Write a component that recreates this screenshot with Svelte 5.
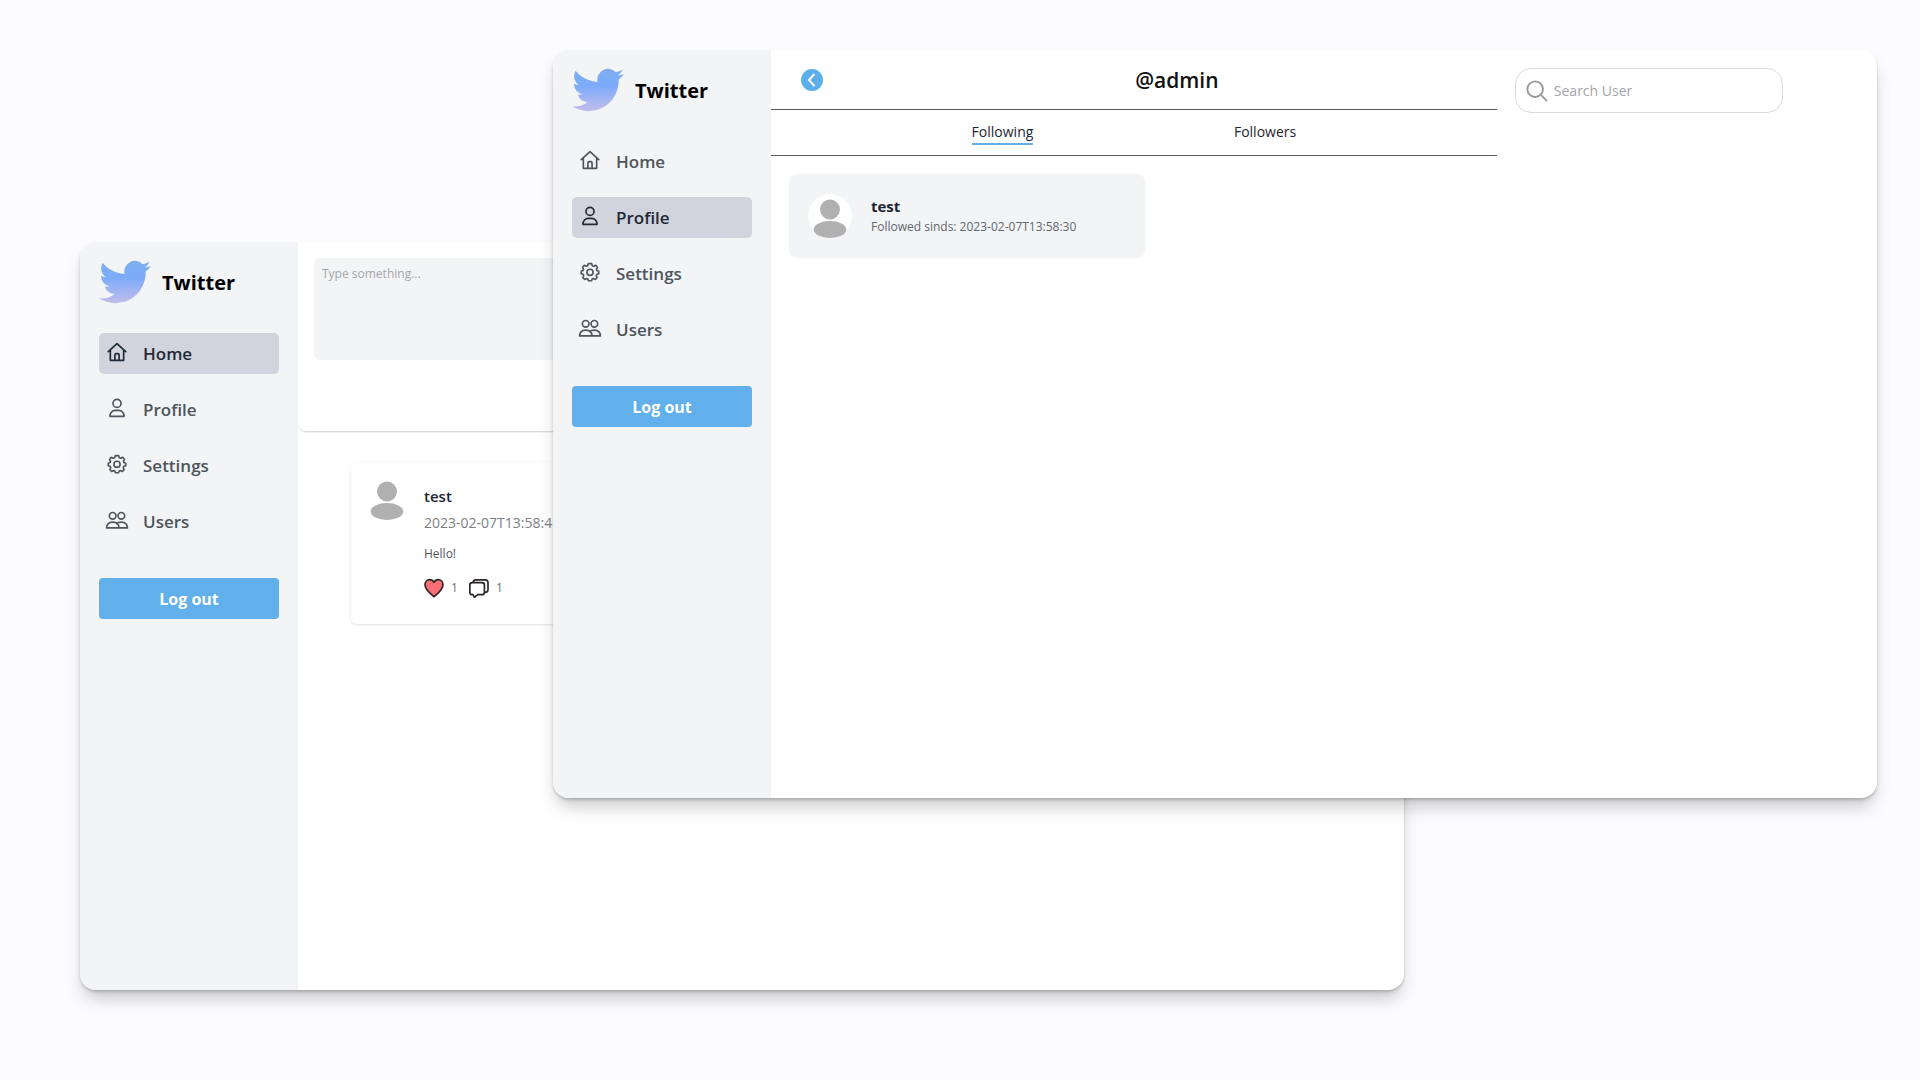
<script>
  const items = ['Home', 'Profile', 'Settings', 'Users'];
</script>

{#snippet icon(name)}
  <svg class="nav-icon" viewBox="0 0 24 24" aria-hidden="true">
    {#if name === 'Home'}
      <path d="M1.500 11.500 12 2 22.500 11.500M4 10V22H20V10M9.500 22V15.500A1.500 1.500 0 0 1 11 14H13A1.500 1.500 0 0 1 14.500 15.500V22" />
    {:else if name === 'Profile'}
      <circle cx="12" cy="6.500" r="4.800" />
      <path d="M3.500 22C3.500 17.800 6.500 14.800 10 14.800H14C17.500 14.800 20.500 17.800 20.500 22Z" />
    {:else if name === 'Settings'}
      <path d="M10 2H14L14.800 4.400 16.500 5.100 18.900 4 21 6.500 19.700 8.800 20.200 10.200 22.500 11V14L20.200 14.800 19.500 16.500 20.500 18.700 18.300 21 16 19.900 14.600 20.500 13.800 22.500H10.200L9.400 20.500 8 19.900 5.700 21 3.500 18.700 4.500 16.500 3.800 14.800 1.500 14V11L3.800 10.200 4.300 8.800 3 6.500 5.100 4 7.500 5.100 9.200 4.400Z" />
      <circle cx="12" cy="12.400" r="3.700" />
    {:else}
      <circle cx="6.800" cy="7" r="4" />
      <circle cx="17.200" cy="7" r="4" />
      <path d="M-.5 21.500C-.3 17.500 2 14.500 6.800 14.500S14.300 17.500 14.500 21.500ZM11.500 16.200C13 15 15 14.500 17.200 14.500 22 14.500 24.300 17.500 24.500 21.500H14.500" />
    {/if}
  </svg>
{/snippet}

{#snippet avatar()}
  <svg class="avatar" viewBox="0 0 44 44" aria-hidden="true">
    <circle cx="22" cy="22" r="22" fill="#fff" />
    <circle cx="22" cy="15.500" r="10" />
    <ellipse cx="22" cy="35.500" rx="16.300" ry="8.500" />
  </svg>
{/snippet}

{#snippet sidebar(active, id)}
  <aside class="sidebar">
    <div class="brand">
      <svg class="bird" viewBox="0 2.200 24 19.600" aria-hidden="true">
        <defs>
          <linearGradient id={id} x1="0" y1="0" x2="0" y2="1">
            <stop offset="0" stop-color="#7faef0" />
            <stop offset=".4" stop-color="#7dabfb" />
            <stop offset="1" stop-color="#c3bcec" />
          </linearGradient>
        </defs>
        <path fill="url(#{id})" d="M23.953 4.570a10 10 0 0 1-2.825.775 4.958 4.958 0 0 0 2.163-2.723c-.951.555-2.005.959-3.127 1.184a4.920 4.920 0 0 0-8.384 4.482C7.690 8.095 4.067 6.130 1.640 3.162a4.822 4.822 0 0 0-.666 2.475c0 1.710.870 3.213 2.188 4.096a4.904 4.904 0 0 1-2.228-.616v.060a4.923 4.923 0 0 0 3.946 4.827 4.996 4.996 0 0 1-2.212.085 4.936 4.936 0 0 0 4.604 3.417 9.867 9.867 0 0 1-6.102 2.105c-.390 0-.779-.023-1.170-.067a13.995 13.995 0 0 0 7.557 2.209c9.053 0 13.998-7.496 13.998-13.985 0-.210 0-.420-.015-.630A9.935 9.935 0 0 0 24 4.590z" />
      </svg>
      <span>Twitter</span>
    </div>
    <nav>
      {#each items as item}
        <a href="#{item.toLowerCase()}" class:active={item === active}>
          {@render icon(item)}<span>{item}</span>
        </a>
      {/each}
    </nav>
    <button class="logout" type="button">Log out</button>
  </aside>
{/snippet}

<main class="desktop">
  <section class="window back-window" aria-label="Home">
    {@render sidebar('Home', 'bird-home')}
    <div class="feed">
      <div class="composer">
        <textarea placeholder="Type something..." aria-label="New post"></textarea>
      </div>
      <article class="post">
        {@render avatar()}
        <div class="post-body">
          <strong>test</strong>
          <time>2023-02-07T13:58:4</time>
          <p>Hello!</p>
          <div class="actions">
            <button type="button" aria-label="Like">
              <svg viewBox="0 0 24 24" aria-hidden="true">
                <path fill="#fb6f74" d="M12 22.500C8.500 19.500 1.200 14.200 1.200 8 1.200 4.500 3.800 2 6.800 2 9.200 2 11 3.300 12 5.200 13 3.300 14.800 2 17.200 2 20.200 2 22.800 4.500 22.800 8 22.800 14.200 15.500 19.500 12 22.500Z" />
              </svg>
            </button>
            <span>1</span>
            <button type="button" aria-label="Comments">
              <svg viewBox="0 0 24 24" aria-hidden="true">
                <path fill="none" d="M4 5.500H15.500A3 3 0 0 1 18.500 8.500V17A3 3 0 0 1 15.500 20H10.500L6.500 23.300 4.800 20H4A3 3 0 0 1 1 17V8.500A3 3 0 0 1 4 5.500ZM5 5.500C5 3.500 6 2.200 8 2.200H19.500A3.300 3.300 0 0 1 22.800 5.500V14C22.800 16 21.500 17.200 18.500 17.200" />
              </svg>
            </button>
            <span>1</span>
          </div>
        </div>
      </article>
    </div>
  </section>

  <section class="window front-window" aria-label="Profile">
    {@render sidebar('Profile', 'bird-profile')}
    <div class="follows">
      <header>
        <button class="back" type="button" aria-label="Back">
          <svg viewBox="0 0 22 22" aria-hidden="true"><path d="M13 5.500 8 11 13 16.500" /></svg>
        </button>
        <h1>@admin</h1>
      </header>
      <div class="tabs">
        <button type="button" class="current">Following</button>
        <button type="button">Followers</button>
      </div>
      <article class="user">
        {@render avatar()}
        <div>
          <strong>test</strong>
          <p>Followed sinds: 2023-02-07T13:58:30</p>
        </div>
      </article>
    </div>
    <div class="search-column">
      <label class="search">
        <svg viewBox="0 0 24 24" aria-hidden="true">
          <circle cx="10" cy="10" r="8.500" /><path d="M16 16 23 23" />
        </svg>
        <input type="search" placeholder="Search User" aria-label="Search User" />
      </label>
    </div>
  </section>
</main>

<style>
  :global(body) {
    margin: 0;
    background: #fcfcfe;
  }
  .desktop, .desktop * {
    box-sizing: border-box;
  }
  .desktop {
    position: relative;
    min-height: 100vh;
    overflow: hidden;
    font-family: "Open Sans", "Noto Sans", sans-serif;
    font-size: 14px;
    color: #1f2430;
  }
  button, input, textarea {
    font: inherit;
    color: inherit;
    border: 0;
    margin: 0;
    padding: 0;
    background: none;
  }
  button { cursor: pointer; }
  p, h1 { margin: 0; }
  svg { display: block; flex: none; }

  .window {
    position: absolute;
    width: calc(100vw - 596px);
    min-height: 748px;
    display: grid;
    grid-template-columns: 218px minmax(0, 21fr) minmax(0, 11fr);
    border-radius: 16px;
    overflow: hidden;
    background: #fff;
    box-shadow: 0 2px 3px rgba(0, 0, 0, .18), 0 12px 18px -4px rgba(0, 0, 0, .22);
  }
  .back-window { left: 80px; top: 242px; }
  .front-window { right: 43px; top: 50px; }

  .sidebar {
    padding: 18px 19px;
    background: #f3f4f6;
  }
  .brand {
    display: flex;
    align-items: center;
    gap: 11px;
    height: 45px;
    margin-bottom: 28px;
    font-size: 20px;
    font-weight: 700;
    color: #000;
  }
  .bird { width: 52px; height: 44px; margin-bottom: 2px; }
  nav {
    display: grid;
    gap: 15px;
  }
  nav a {
    display: flex;
    align-items: center;
    gap: 16px;
    height: 41px;
    padding: 0 8px;
    border-radius: 5px;
    font-size: 17px;
    font-weight: 600;
    color: #4e555c;
    text-decoration: none;
  }
  nav a.active {
    background: #d1d4dc;
    color: #1f2937;
  }
  .nav-icon {
    width: 20px;
    height: 20px;
    margin-bottom: 4px;
    overflow: visible;
    fill: none;
    stroke: currentColor;
    stroke-width: 2;
    stroke-linejoin: round;
    stroke-linecap: round;
  }
  .logout {
    width: 100%;
    height: 41px;
    margin-top: 36px;
    border-radius: 4px;
    background: #61b0eb;
    color: #fff;
    font-size: 16px;
    font-weight: 700;
  }

  .avatar {
    width: 44px;
    height: 44px;
    fill: #b0b0b0;
  }
  .composer {
    height: 189px;
    padding: 16px;
    border-radius: 0 0 8px 8px;
    box-shadow: 0 2px 2px -1px rgba(0, 0, 0, .2);
  }
  textarea {
    display: block;
    width: 100%;
    height: 102px;
    padding: 8px;
    border-radius: 6px;
    background: #f3f4f6;
    font-size: 12px;
    line-height: 16px;
    resize: none;
  }
  ::placeholder {
    color: #a3a6ac;
    opacity: 1;
  }
  .post {
    display: flex;
    gap: 15px;
    margin: 31px 53px;
    padding: 14px 14px 20px;
    border-radius: 6px;
    box-shadow: 0 1px 3px rgba(0, 0, 0, .12);
  }
  .post-body {
    display: grid;
    padding-top: 7px;
  }
  .post-body strong {
    font-size: 15px;
    font-weight: 600;
    line-height: 26px;
  }
  .post-body time {
    font-size: 14px;
    line-height: 28px;
    color: #7b7e84;
  }
  .post-body p {
    font-size: 12px;
    line-height: 34px;
    color: #51555c;
  }
  .actions {
    display: flex;
    align-items: center;
    gap: 7px;
    height: 33px;
    font-size: 12px;
    color: #6b6e74;
  }
  .actions span { margin-right: 4px; }
  .actions svg {
    width: 20px;
    height: 20px;
    stroke: #2c2528;
    stroke-width: 2;
    stroke-linejoin: round;
  }

  header {
    display: flex;
    align-items: center;
    height: 60px;
    padding: 0 0 0 30px;
    border-bottom: 1px solid #555860;
  }
  .back {
    width: 22px;
    height: 22px;
    border-radius: 50%;
    background: #5aaeea;
  }
  .back svg {
    width: 22px;
    height: 22px;
    fill: none;
    stroke: #fff;
    stroke-width: 2;
    stroke-linecap: round;
  }
  h1 {
    flex: 1;
    padding-left: 34px;
    text-align: center;
    font-size: 21px;
    font-weight: 600;
    color: #111;
  }
  .tabs {
    display: flex;
    align-items: center;
    justify-content: space-evenly;
    height: 46px;
    border-bottom: 1px solid #555860;
  }
  .tabs button {
    border-bottom: 2px solid transparent;
    line-height: 22px;
  }
  .tabs .current { border-color: #61b0eb; }
  .user {
    display: flex;
    align-items: center;
    gap: 19px;
    width: 49%;
    height: 84px;
    margin: 18px;
    padding: 0 19px;
    border-radius: 8px;
    background: #f3f4f6;
  }
  .user strong {
    display: block;
    font-size: 15px;
    line-height: 22px;
  }
  .user p {
    font-size: 12px;
    line-height: 20px;
    color: #62666d;
  }
  .search-column {
    padding: 18px;
  }
  .search {
    display: flex;
    align-items: center;
    gap: 6px;
    width: 268px;
    height: 45px;
    padding: 0 10px;
    border: 1px solid #d8dcde;
    border-radius: 16px;
  }
  .search svg {
    width: 22px;
    height: 22px;
    fill: none;
    stroke: #96999c;
    stroke-width: 2;
  }
  .search input {
    flex: 1;
    min-width: 0;
    outline: 0;
  }
</style>
